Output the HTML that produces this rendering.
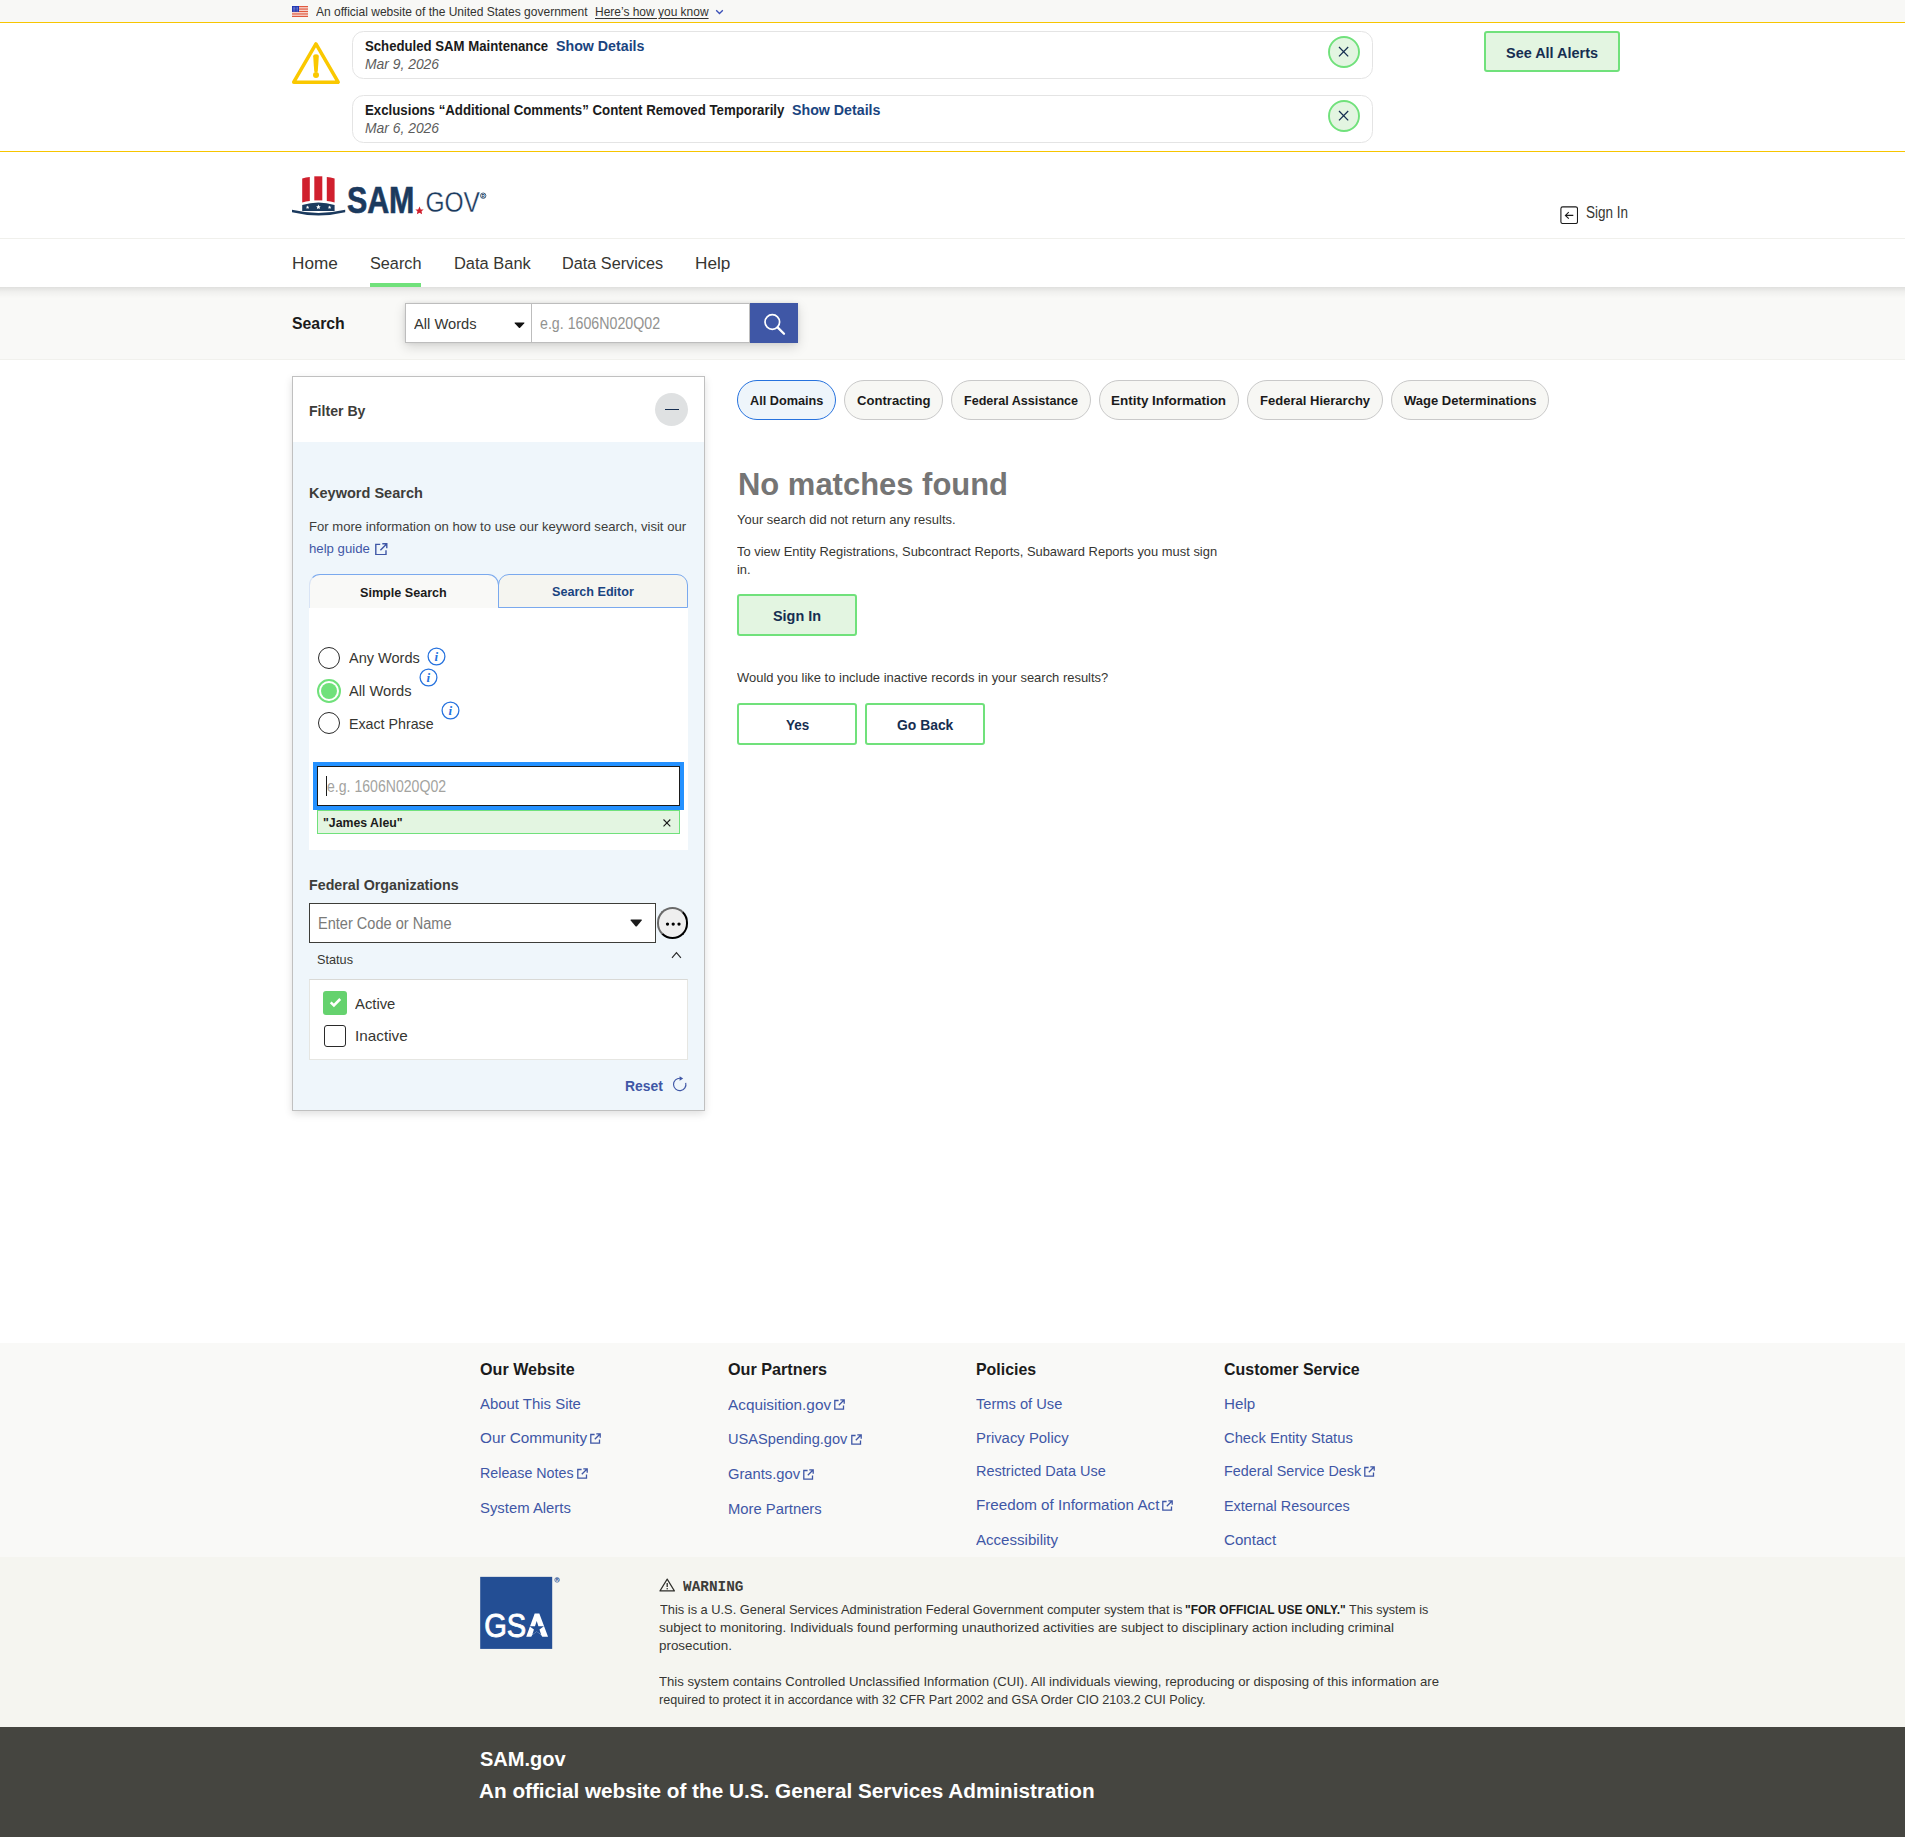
<!DOCTYPE html>
<html lang="en"><head><meta charset="utf-8"><title>SAM.gov | Search</title>
<style>
html,body{margin:0;padding:0}
body{width:1905px;height:1837px;position:relative;overflow:hidden;background:#fff;font-family:"Liberation Sans",sans-serif;}
#pg{position:absolute;left:0;top:0;width:1905px;height:1837px;overflow:hidden}
#pg div,#pg svg,#pg span{position:absolute;box-sizing:border-box}
#pg span{white-space:nowrap;line-height:1;transform-origin:0 0;display:block}
#pg span b{font-weight:700}
</style></head><body><div id="pg">
<div style="left:0px;top:0px;width:1905px;height:22px;background:#f8f8f6"></div>
<div style="left:0px;top:22px;width:1905px;height:1px;background:#f7c500"></div>
<div style="left:0px;top:151px;width:1905px;height:1px;background:#f7c500"></div>
<div style="left:0px;top:238px;width:1905px;height:1px;background:#f0f0ec"></div>
<div style="left:0px;top:287px;width:1905px;height:73px;background:#f9f9f7;border-bottom:1px solid #f1f1ed"></div>
<div style="left:0px;top:287px;width:1905px;height:11px;background:linear-gradient(to bottom,rgba(0,0,0,.10),rgba(0,0,0,.035) 45%,rgba(0,0,0,0))"></div>
<svg style="left:292px;top:6px" width="16" height="11" viewBox="0 0 16 11"><rect width="16" height="11" fill="#fff"/><rect y="0" width="16" height="0.85" fill="#db3e1f"/><rect y="1.69" width="16" height="0.85" fill="#db3e1f"/><rect y="3.38" width="16" height="0.85" fill="#db3e1f"/><rect y="5.07" width="16" height="0.85" fill="#db3e1f"/><rect y="6.76" width="16" height="0.85" fill="#db3e1f"/><rect y="8.45" width="16" height="0.85" fill="#db3e1f"/><rect y="10.15" width="16" height="0.85" fill="#db3e1f"/><rect width="7" height="5.9" fill="#1e33b1"/><g fill="#fff" opacity=".75"><rect x="0.9" y="0.9" width=".7" height=".6"/><rect x="2.3" y="0.9" width=".7" height=".6"/><rect x="3.7" y="0.9" width=".7" height=".6"/><rect x="5.1" y="0.9" width=".7" height=".6"/><rect x="0.9" y="2.2" width=".7" height=".6"/><rect x="2.3" y="2.2" width=".7" height=".6"/><rect x="3.7" y="2.2" width=".7" height=".6"/><rect x="5.1" y="2.2" width=".7" height=".6"/><rect x="0.9" y="3.5" width=".7" height=".6"/><rect x="2.3" y="3.5" width=".7" height=".6"/><rect x="3.7" y="3.5" width=".7" height=".6"/><rect x="5.1" y="3.5" width=".7" height=".6"/><rect x="0.9" y="4.7" width=".7" height=".6"/><rect x="2.3" y="4.7" width=".7" height=".6"/><rect x="3.7" y="4.7" width=".7" height=".6"/><rect x="5.1" y="4.7" width=".7" height=".6"/></g></svg>
<svg style="left:715px;top:8.5px" width="9" height="6" viewBox="0 0 9 6"><path d="M1.2 1.2 L4.5 4.5 L7.8 1.2" fill="none" stroke="#3a4fb8" stroke-width="1.3"/></svg>
<svg style="left:291px;top:40px" width="50" height="46" viewBox="0 0 50 46"><path d="M24.95 3.9 L47.2 42.2 L2.7 42.2 Z" fill="none" stroke="#fac800" stroke-width="3.5" stroke-linejoin="round"/><path d="M22.2 16.6 Q22.2 14.2 25 14.2 Q27.8 14.2 27.8 16.6 L26.8 31.2 Q26.7 32.3 25 32.3 Q23.3 32.3 23.2 31.2 Z" fill="#fac800"/><circle cx="25" cy="35" r="3" fill="#fac800"/></svg>
<div style="left:352px;top:31px;width:1021px;height:48px;border:1px solid #e4e4e4;border-radius:11.5px;background:#fff"></div>
<svg style="left:1326px;top:33.9px" width="36" height="36" viewBox="0 0 36 36"><circle cx="18" cy="18" r="15" fill="#e3f5e1" stroke="#70e17b" stroke-width="1.9"/><path d="M13 13 L22.2 22.4 M22.2 13 L13 22.4" stroke="#162e51" stroke-width="1.25" fill="none"/></svg>
<div style="left:352px;top:95px;width:1021px;height:48px;border:1px solid #e4e4e4;border-radius:11.5px;background:#fff"></div>
<svg style="left:1326px;top:97.9px" width="36" height="36" viewBox="0 0 36 36"><circle cx="18" cy="18" r="15" fill="#e3f5e1" stroke="#70e17b" stroke-width="1.9"/><path d="M13 13 L22.2 22.4 M22.2 13 L13 22.4" stroke="#162e51" stroke-width="1.25" fill="none"/></svg>
<div style="left:1484px;top:31.3px;width:135.7px;height:41px;border:2px solid #70e17b;background:#e3f5e1;border-radius:3px"></div>
<svg style="left:290px;top:174px" width="200" height="44" viewBox="290 174 200 44"><path d="M302.2 178.6 Q306 177.3 309.8 176.9 L309.8 201 Q306 201.4 302.2 202.4 Z" fill="#d0202e"/><path d="M314.3 176.3 L322.3 176.3 L322.3 200.4 L314.3 200.4 Z" fill="#d0202e"/><path d="M326.8 176.9 Q330.6 177.3 334.6 178.6 L334.6 202.4 Q330.6 201.4 326.8 201 Z" fill="#d0202e"/><path d="M302.2 205 Q318.4 199.8 334.6 205 L334.6 211 L302.2 211 Z" fill="#1b3a5e"/><path transform="translate(307.6 207.3) scale(1.9)" d="M0 -1 L.29 -.31 L.95 -.31 L.47 .12 L.59 .81 L0 .45 L-.59 .81 L-.47 .12 L-.95 -.31 L-.29 -.31 Z" fill="#fff"/><path transform="translate(318.4 207) scale(2.5)" d="M0 -1 L.29 -.31 L.95 -.31 L.47 .12 L.59 .81 L0 .45 L-.59 .81 L-.47 .12 L-.95 -.31 L-.29 -.31 Z" fill="#fff"/><path transform="translate(329.6 207.3) scale(1.9)" d="M0 -1 L.29 -.31 L.95 -.31 L.47 .12 L.59 .81 L0 .45 L-.59 .81 L-.47 .12 L-.95 -.31 L-.29 -.31 Z" fill="#fff"/><path d="M292 209.8 Q318.4 216 345.2 209.8 L345.2 212.2 Q318.4 218.6 292 212.2 Z" fill="#1b3a5e"/><path transform="translate(419.5 210.8) scale(4.4)" d="M0 -1 L.29 -.31 L.95 -.31 L.47 .12 L.59 .81 L0 .45 L-.59 .81 L-.47 .12 L-.95 -.31 L-.29 -.31 Z" fill="#d0202e"/><text x="346.9" y="212.7" font-family="Liberation Sans, sans-serif" font-weight="700" font-size="37.8" fill="#1b3a5e" stroke="#1b3a5e" stroke-width=".7" textLength="67.5" lengthAdjust="spacingAndGlyphs">SAM</text><text x="425.4" y="212.4" font-family="Liberation Sans, sans-serif" font-weight="400" font-size="28.8" fill="#1b3a5e" stroke="#fff" stroke-width=".3" paint-order="fill stroke" textLength="54.6" lengthAdjust="spacingAndGlyphs">GOV</text><circle cx="483.2" cy="195.7" r="2.7" fill="none" stroke="#1b3a5e" stroke-width=".8"/><text x="481.6" y="197.5" font-family="Liberation Sans, sans-serif" font-weight="700" font-size="4.6" fill="#1b3a5e">R</text></svg>
<svg style="left:1559.5px;top:205.5px" width="18.5" height="18.5" viewBox="0 0 18.5 18.5"><rect x=".9" y=".9" width="16.6" height="16.6" rx="1.8" fill="none" stroke="#1b1b1b" stroke-width="1.1"/><path d="M13.3 9.4 H5.6 M8.8 6.1 L5.4 9.4 L8.8 12.7" fill="none" stroke="#1b1b1b" stroke-width="1.1"/></svg>
<div style="left:370px;top:282.7px;width:51px;height:4.3px;background:#70e17b"></div>
<div style="left:405.3px;top:303px;width:392.4px;height:40px;box-shadow:0 4px 11px rgba(0,0,0,.15),0 0 4px rgba(0,0,0,.08);background:#fff"></div>
<div style="left:405.3px;top:303px;width:127px;height:40px;border:1px solid #bdbdbd;background:#fff"></div>
<div style="left:532.3px;top:303px;width:218px;height:40px;border:1px solid #bdbdbd;border-left:none;background:#fff"></div>
<svg style="left:513.5px;top:321.5px" width="11" height="6.4" viewBox="0 0 11 6.4"><path d="M1 .6 H10 Q10.8 .6 10.3 1.3 L6.1 5.7 Q5.5 6.3 4.9 5.7 L.7 1.3 Q.2 .6 1 .6 Z" fill="#111"/></svg>
<div style="left:749.7px;top:303px;width:48px;height:40px;background:#3f57a6"></div>
<svg style="left:762px;top:311.5px" width="24" height="24" viewBox="0 0 24 24"><circle cx="10.3" cy="10" r="7.3" fill="none" stroke="#fff" stroke-width="1.7"/><path d="M15.6 15.4 L22 21.8" stroke="#fff" stroke-width="2.3" stroke-linecap="round"/></svg>
<div style="left:292px;top:376px;width:413px;height:734.5px;border:1px solid #c0c0c0;background:#eff6fb;box-shadow:0 3px 8px rgba(0,0,0,.13)"></div>
<div style="left:293px;top:377px;width:411px;height:65px;background:#fff"></div>
<div style="left:655px;top:393px;width:33px;height:33px;border-radius:50%;background:#dfe1e2"></div>
<div style="left:664.6px;top:408.7px;width:14.6px;height:1.2px;background:#162e51"></div>
<svg style="left:375px;top:542.5px" width="12.6" height="12.4" viewBox="0 0 12.6 12.4"><path d="M5.2 1.4 H.8 V11.6 H11 V7.2" fill="none" stroke="#3f57a6" stroke-width="1.4"/><path d="M7.3 .8 H11.8 V5.3 M11.6 1 L5.4 7.2" fill="none" stroke="#3f57a6" stroke-width="1.4"/></svg>
<div style="left:309px;top:607px;width:379px;height:243px;background:#fff"></div>
<div style="left:309px;top:574px;width:189.8px;height:33.5px;border:1px solid #7aa9ee;border-left-color:rgba(122,169,238,.25);border-bottom:none;border-radius:11px 11px 0 0;background:#f9f9f7"></div>
<div style="left:498px;top:574px;width:190px;height:33.5px;border:1px solid #7aa9ee;border-radius:11px 11px 0 0;background:#f5f5f0"></div>
<div style="left:318px;top:646.9px;width:22px;height:22px;border-radius:50%;border:1.4px solid #2a2a2a;background:#fff"></div>
<div style="left:317.1px;top:679.2px;width:23.8px;height:23.8px;border-radius:50%;border:2.7px solid #70e17b;background:#fff"></div>
<div style="left:320.9px;top:683.0px;width:16.2px;height:16.2px;border-radius:50%;background:#70e17b"></div>
<div style="left:318px;top:711.8px;width:22px;height:22px;border-radius:50%;border:1.4px solid #2a2a2a;background:#fff"></div>
<svg style="left:426.6px;top:646.7px" width="19" height="19" viewBox="0 0 19 19"><circle cx="9.5" cy="9.5" r="8.4" fill="none" stroke="#2672de" stroke-width="1.25"/><text x="7.6" y="13.7" font-family="Liberation Serif, serif" font-style="italic" font-weight="700" font-size="13" fill="#2672de">i</text></svg>
<svg style="left:418.8px;top:667.7px" width="19" height="19" viewBox="0 0 19 19"><circle cx="9.5" cy="9.5" r="8.4" fill="none" stroke="#2672de" stroke-width="1.25"/><text x="7.6" y="13.7" font-family="Liberation Serif, serif" font-style="italic" font-weight="700" font-size="13" fill="#2672de">i</text></svg>
<svg style="left:440.6px;top:700.6px" width="19" height="19" viewBox="0 0 19 19"><circle cx="9.5" cy="9.5" r="8.4" fill="none" stroke="#2672de" stroke-width="1.25"/><text x="7.6" y="13.7" font-family="Liberation Serif, serif" font-style="italic" font-weight="700" font-size="13" fill="#2672de">i</text></svg>
<div style="left:313px;top:762px;width:371px;height:48px;background:#2491ff"></div>
<div style="left:317px;top:766px;width:363px;height:40px;border:1px solid #1b1b1b;background:#fff"></div>
<div style="left:326px;top:776px;width:1px;height:20px;background:#1b1b1b"></div>
<div style="left:317px;top:810.4px;width:363px;height:23.5px;border:1px solid #70e17b;background:#e3f5e1"></div>
<svg style="left:663.2px;top:819.3px" width="7.8" height="7.8" viewBox="0 0 7.8 7.8"><path d="M.5 .5 L7.3 7.3 M7.3 .5 L.5 7.3" stroke="#1b1b1b" stroke-width="1.1" fill="none"/></svg>
<div style="left:309px;top:903px;width:346.9px;height:40px;border:1.1px solid #3d3d38;background:#fff"></div>
<svg style="left:629.7px;top:919.2px" width="12.4" height="8" viewBox="0 0 12.4 8"><path d="M1 .6 H11.4 Q12.3 .6 11.7 1.4 L6.9 7.2 Q6.2 7.9 5.5 7.2 L.7 1.4 Q.1 .6 1 .6 Z" fill="#1b1b1b"/></svg>
<div style="left:656.7px;top:907.2px;width:31.4px;height:31.6px;border-radius:50%;border:2px solid;border-color:#6a6a6a #000 #000 #6a6a6a;background:#efefef"></div>
<svg style="left:664px;top:920px" width="18" height="8" viewBox="664 920 18 8"><circle cx="667.5" cy="924.1" r="1.65"/><circle cx="673.2" cy="924.1" r="1.65"/><circle cx="679" cy="924.1" r="1.65"/></svg>
<svg style="left:670px;top:950px" width="13" height="10" viewBox="670 950 13 10"><path d="M672 957.9 L676.45 952.6 L680.9 957.9" fill="none" stroke="#2a2a2a" stroke-width="1.15"/></svg>
<div style="left:309px;top:979.2px;width:379px;height:80.6px;border:1px solid #e6e6e2;border-top:1.5px solid #d9d9d6;background:#fff"></div>
<div style="left:323.2px;top:991px;width:23.8px;height:23.8px;border-radius:3px;background:#65d26e"></div>
<svg style="left:328.5px;top:996.7px" width="13" height="11" viewBox="0 0 13 11"><path d="M1.7 5.4 L4.9 8.5 L11.2 2" fill="none" stroke="#fff" stroke-width="2.6"/></svg>
<div style="left:324px;top:1025px;width:22px;height:22px;border-radius:3px;border:1.4px solid #2a2a2a;background:#fff"></div>
<svg style="left:672px;top:1076px" width="16" height="16" viewBox="0 0 16 16"><path d="M13.7 6.8 A6.2 6.2 0 1 1 8.3 2.25" fill="none" stroke="#3f57a6" stroke-width="1.15"/><path d="M7.6 .2 L11.2 2.4 L7.6 4.8 Z" fill="#3f57a6"/></svg>
<div style="left:737.2px;top:380.3px;width:98.79999999999998px;height:39.3px;border:1px solid #2672de;background:#eef5fb;border-radius:20px"></div>
<div style="left:844.1px;top:380.3px;width:98.9px;height:39.3px;border:1px solid #c9c9c9;background:#f7f7f4;border-radius:20px"></div>
<div style="left:951.1px;top:380.3px;width:139.8999999999999px;height:39.3px;border:1px solid #c9c9c9;background:#f7f7f4;border-radius:20px"></div>
<div style="left:1099.2px;top:380.3px;width:139.99999999999991px;height:39.3px;border:1px solid #c9c9c9;background:#f7f7f4;border-radius:20px"></div>
<div style="left:1247.3px;top:380.3px;width:135.9px;height:39.3px;border:1px solid #c9c9c9;background:#f7f7f4;border-radius:20px"></div>
<div style="left:1391.3px;top:380.3px;width:158.00000000000014px;height:39.3px;border:1px solid #c9c9c9;background:#f7f7f4;border-radius:20px"></div>
<div style="left:737.2px;top:594.3px;width:119.6px;height:41.6px;border:2px solid #70e17b;background:#e3f5e1;border-radius:3px"></div>
<div style="left:737.2px;top:703.1px;width:119.6px;height:41.6px;border:2px solid #70e17b;background:#fff;border-radius:3px"></div>
<div style="left:864.9px;top:703.1px;width:120.1px;height:41.6px;border:2px solid #70e17b;background:#fff;border-radius:3px"></div>
<div style="left:0px;top:1342.6px;width:1905px;height:214.4px;background:#f9f9f7"></div>
<div style="left:0px;top:1557px;width:1905px;height:170.5px;background:#f5f5f0"></div>
<div style="left:0px;top:1727.4px;width:1905px;height:110px;background:#454540"></div>
<svg style="left:590.1px;top:1432.8000000000002px" width="11" height="11" viewBox="0 0 11 11"><path d="M4.6 1.5 H.8 V10.2 H9.5 V6.4" fill="none" stroke="#3f57a6" stroke-width="1.3"/><path d="M6.3 .8 H10.2 V4.7 M10 1 L4.8 6.2" fill="none" stroke="#3f57a6" stroke-width="1.3"/></svg>
<svg style="left:576.5px;top:1467.9px" width="11" height="11" viewBox="0 0 11 11"><path d="M4.6 1.5 H.8 V10.2 H9.5 V6.4" fill="none" stroke="#3f57a6" stroke-width="1.3"/><path d="M6.3 .8 H10.2 V4.7 M10 1 L4.8 6.2" fill="none" stroke="#3f57a6" stroke-width="1.3"/></svg>
<svg style="left:834.2px;top:1399.4px" width="11" height="11" viewBox="0 0 11 11"><path d="M4.6 1.5 H.8 V10.2 H9.5 V6.4" fill="none" stroke="#3f57a6" stroke-width="1.3"/><path d="M6.3 .8 H10.2 V4.7 M10 1 L4.8 6.2" fill="none" stroke="#3f57a6" stroke-width="1.3"/></svg>
<svg style="left:850.5px;top:1433.8000000000002px" width="11" height="11" viewBox="0 0 11 11"><path d="M4.6 1.5 H.8 V10.2 H9.5 V6.4" fill="none" stroke="#3f57a6" stroke-width="1.3"/><path d="M6.3 .8 H10.2 V4.7 M10 1 L4.8 6.2" fill="none" stroke="#3f57a6" stroke-width="1.3"/></svg>
<svg style="left:803.2px;top:1468.7px" width="11" height="11" viewBox="0 0 11 11"><path d="M4.6 1.5 H.8 V10.2 H9.5 V6.4" fill="none" stroke="#3f57a6" stroke-width="1.3"/><path d="M6.3 .8 H10.2 V4.7 M10 1 L4.8 6.2" fill="none" stroke="#3f57a6" stroke-width="1.3"/></svg>
<svg style="left:1162.3px;top:1499.9px" width="11" height="11" viewBox="0 0 11 11"><path d="M4.6 1.5 H.8 V10.2 H9.5 V6.4" fill="none" stroke="#3f57a6" stroke-width="1.3"/><path d="M6.3 .8 H10.2 V4.7 M10 1 L4.8 6.2" fill="none" stroke="#3f57a6" stroke-width="1.3"/></svg>
<svg style="left:1364.3999999999999px;top:1465.8000000000002px" width="11" height="11" viewBox="0 0 11 11"><path d="M4.6 1.5 H.8 V10.2 H9.5 V6.4" fill="none" stroke="#3f57a6" stroke-width="1.3"/><path d="M6.3 .8 H10.2 V4.7 M10 1 L4.8 6.2" fill="none" stroke="#3f57a6" stroke-width="1.3"/></svg>
<svg style="left:480px;top:1576px" width="82" height="74" viewBox="480 1576 82 74"><rect x="480.2" y="1576.85" width="72" height="72.05" fill="#234e94"/><text x="484.2" y="1636.8" font-family="Liberation Sans, sans-serif" font-size="33.6" fill="#fff" stroke="#fff" stroke-width=".9" textLength="42" lengthAdjust="spacingAndGlyphs">GS</text><path d="M526.2 1636.8 L534.7 1613.4 L539.3 1613.4 L548 1636.8 Z" fill="#fff"/><polygon points="536.70,1621.10 538.41,1626.35 543.93,1626.35 539.46,1629.60 541.17,1634.85 536.70,1631.60 532.23,1634.85 533.94,1629.60 529.47,1626.35 534.99,1626.35" fill="#234e94"/><path d="M532.2 1634.9 L536.7 1631.6 L541.2 1634.9 L542.3 1637 L531.2 1637 Z" fill="#234e94"/><circle cx="557.1" cy="1579.9" r="2.3" fill="none" stroke="#234e94" stroke-width=".7"/><text x="555.7" y="1581.4" font-family="Liberation Sans, sans-serif" font-weight="700" font-size="4" fill="#234e94">R</text></svg>
<svg style="left:659px;top:1578.2px" width="16.4" height="13.6" viewBox="0 0 16.4 13.6"><path d="M8.2 1.1 L15.4 12.9 H1 Z" fill="none" stroke="#2e2e2a" stroke-width="1.15" stroke-linejoin="round"/><path d="M8.2 5 V9" stroke="#2e2e2a" stroke-width="1.3"/><circle cx="8.2" cy="10.8" r=".8" fill="#2e2e2a"/></svg>
<span style="left:315.99px;top:6.01px;font-size:12.6px;color:#333330;transform:scaleX(0.9539);">An official website of the United States government</span>
<span style="left:595.38px;top:6.01px;font-size:12.6px;color:#333330;transform:scaleX(0.9506);text-decoration:underline;text-underline-offset:1.5px;text-decoration-thickness:1px;">Here’s how you know</span>
<span style="left:364.94px;top:39.01px;font-size:14.5px;color:#1b1b1b;font-weight:700;transform:scaleX(0.9087);">Scheduled SAM Maintenance</span>
<span style="left:556.34px;top:39.01px;font-size:14.5px;color:#1a4480;font-weight:700;transform:scaleX(0.9801);">Show Details</span>
<span style="left:364.94px;top:57.01px;font-size:14.6px;color:#5c5c5c;font-style:italic;transform:scaleX(0.9508);">Mar 9, 2026</span>
<span style="left:364.94px;top:103.01px;font-size:14.5px;color:#1b1b1b;font-weight:700;transform:scaleX(0.9137);">Exclusions “Additional Comments” Content Removed Temporarily</span>
<span style="left:792.34px;top:103.01px;font-size:14.5px;color:#1a4480;font-weight:700;transform:scaleX(0.9801);">Show Details</span>
<span style="left:364.94px;top:121.01px;font-size:14.6px;color:#5c5c5c;font-style:italic;transform:scaleX(0.9508);">Mar 6, 2026</span>
<span style="left:1506.32px;top:45.01px;font-size:15.2px;color:#162e51;font-weight:700;transform:scaleX(0.9503);">See All Alerts</span>
<span style="left:1585.61px;top:205.01px;font-size:15.6px;color:#363632;transform:scaleX(0.8649);">Sign In</span>
<span style="left:291.87px;top:255.00px;font-size:17.4px;color:#363632;transform:scaleX(0.9869);">Home</span>
<span style="left:369.56px;top:255.00px;font-size:17.4px;color:#363632;transform:scaleX(0.9342);">Search</span>
<span style="left:453.56px;top:255.00px;font-size:17.4px;color:#363632;transform:scaleX(0.9454);">Data Bank</span>
<span style="left:562.27px;top:255.00px;font-size:17.4px;color:#363632;transform:scaleX(0.9338);">Data Services</span>
<span style="left:695.27px;top:255.00px;font-size:17.4px;color:#363632;transform:scaleX(0.9889);">Help</span>
<span style="left:291.88px;top:316.00px;font-size:16.6px;color:#1b1b1b;font-weight:700;transform:scaleX(0.9528);">Search</span>
<span style="left:413.72px;top:316.01px;font-size:15.4px;color:#363632;transform:scaleX(0.9545);">All Words</span>
<span style="left:539.91px;top:316.01px;font-size:15.6px;color:#929290;transform:scaleX(0.9113);">e.g. 1606N020Q02</span>
<span style="left:309.24px;top:404.00px;font-size:14.4px;color:#3d3d3a;font-weight:700;transform:scaleX(0.9804);">Filter By</span>
<span style="left:309.24px;top:486.01px;font-size:14.6px;color:#3d3d3a;font-weight:700;transform:scaleX(0.9955);">Keyword Search</span>
<span style="left:308.98px;top:521.00px;font-size:12.7px;color:#3d3d3a;transform:scaleX(1.0323);">For more information on how to use our keyword search, visit our</span>
<span style="left:308.98px;top:543.01px;font-size:12.7px;color:#3f57a6;transform:scaleX(1.0394);">help guide</span>
<span style="left:359.77px;top:586.02px;font-size:13.2px;color:#1b1b1b;font-weight:700;transform:scaleX(0.9549);">Simple Search</span>
<span style="left:552.17px;top:585.01px;font-size:13.2px;color:#1a4480;font-weight:700;transform:scaleX(0.9550);">Search Editor</span>
<span style="left:348.73px;top:650.01px;font-size:15px;color:#363632;transform:scaleX(0.9683);">Any Words</span>
<span style="left:348.73px;top:683.01px;font-size:15px;color:#363632;transform:scaleX(0.9792);">All Words</span>
<span style="left:348.73px;top:716.00px;font-size:15px;color:#363632;transform:scaleX(0.9480);">Exact Phrase</span>
<span style="left:326.61px;top:779.01px;font-size:15.6px;color:#a3a3a0;transform:scaleX(0.9037);">e.g. 1606N020Q02</span>
<span style="left:323.07px;top:816.01px;font-size:13px;color:#1b1b1b;font-weight:700;transform:scaleX(0.9462);">"James Aleu"</span>
<span style="left:309.24px;top:878.01px;font-size:14.6px;color:#3d3d3a;font-weight:700;transform:scaleX(0.9764);">Federal Organizations</span>
<span style="left:318.31px;top:916.01px;font-size:15.6px;color:#7a7a78;transform:scaleX(0.9335);">Enter Code or Name</span>
<span style="left:317.28px;top:954.01px;font-size:12.8px;color:#363632;transform:scaleX(0.9916);">Status</span>
<span style="left:354.52px;top:996.00px;font-size:15px;color:#363632;transform:scaleX(0.9881);">Active</span>
<span style="left:355.12px;top:1028.00px;font-size:15px;color:#363632;transform:scaleX(1.0188);">Inactive</span>
<span style="left:625.24px;top:1079.01px;font-size:14.4px;color:#3f57a6;font-weight:700;transform:scaleX(0.9654);">Reset</span>
<span style="left:749.72px;top:394.01px;font-size:13.2px;color:#1b1b1b;font-weight:700;transform:scaleX(0.9616);">All Domains</span>
<span style="left:856.52px;top:394.01px;font-size:13.2px;color:#1b1b1b;font-weight:700;transform:scaleX(0.9945);">Contracting</span>
<span style="left:963.77px;top:394.01px;font-size:13.2px;color:#1b1b1b;font-weight:700;transform:scaleX(0.9529);">Federal Assistance</span>
<span style="left:1111.17px;top:394.01px;font-size:13.2px;color:#1b1b1b;font-weight:700;transform:scaleX(1.0201);">Entity Information</span>
<span style="left:1259.72px;top:394.01px;font-size:13.2px;color:#1b1b1b;font-weight:700;transform:scaleX(0.9881);">Federal Hierarchy</span>
<span style="left:1403.52px;top:394.01px;font-size:13.2px;color:#1b1b1b;font-weight:700;transform:scaleX(0.9870);">Wage Determinations</span>
<span style="left:737.81px;top:469.00px;font-size:31.7px;color:#757575;font-weight:700;transform:scaleX(0.9769);">No matches found</span>
<span style="left:737.08px;top:514.02px;font-size:12.8px;color:#363632;transform:scaleX(1.0130);">Your search did not return any results.</span>
<span style="left:737.08px;top:546.01px;font-size:12.8px;color:#363632;transform:scaleX(1.0089);">To view Entity Registrations, Subcontract Reports, Subaward Reports you must sign</span>
<span style="left:737.08px;top:564.01px;font-size:12.8px;color:#363632;transform:scaleX(1.0045);">in.</span>
<span style="left:773.34px;top:609.00px;font-size:14.4px;color:#162e51;font-weight:700;transform:scaleX(1.0017);">Sign In</span>
<span style="left:737.08px;top:672.01px;font-size:12.8px;color:#363632;transform:scaleX(1.0122);">Would you like to include inactive records in your search results?</span>
<span style="left:785.74px;top:718.00px;font-size:14.4px;color:#162e51;font-weight:700;transform:scaleX(0.9369);">Yes</span>
<span style="left:897.14px;top:718.00px;font-size:14.4px;color:#162e51;font-weight:700;transform:scaleX(0.9650);">Go Back</span>
<span style="left:479.58px;top:1362.01px;font-size:16.7px;color:#1b1b1b;font-weight:700;transform:scaleX(0.9660);">Our Website</span>
<span style="left:727.78px;top:1362.01px;font-size:16.7px;color:#1b1b1b;font-weight:700;transform:scaleX(0.9700);">Our Partners</span>
<span style="left:975.58px;top:1362.01px;font-size:16.7px;color:#1b1b1b;font-weight:700;transform:scaleX(0.9520);">Policies</span>
<span style="left:1223.88px;top:1362.01px;font-size:16.7px;color:#1b1b1b;font-weight:700;transform:scaleX(0.9558);">Customer Service</span>
<span style="left:479.62px;top:1396.00px;font-size:15.4px;color:#3f57a6;transform:scaleX(0.9693);">About This Site</span>
<span style="left:479.62px;top:1430.00px;font-size:15.4px;color:#3f57a6;transform:scaleX(0.9947);">Our Community</span>
<span style="left:479.62px;top:1465.01px;font-size:15.4px;color:#3f57a6;transform:scaleX(0.9271);">Release Notes</span>
<span style="left:479.62px;top:1500.00px;font-size:15.4px;color:#3f57a6;transform:scaleX(0.9660);">System Alerts</span>
<span style="left:727.82px;top:1397.01px;font-size:15.4px;color:#3f57a6;transform:scaleX(0.9958);">Acquisition.gov</span>
<span style="left:727.82px;top:1431.00px;font-size:15.4px;color:#3f57a6;transform:scaleX(0.9492);">USASpending.gov</span>
<span style="left:727.82px;top:1466.01px;font-size:15.4px;color:#3f57a6;transform:scaleX(0.9576);">Grants.gov</span>
<span style="left:727.82px;top:1501.00px;font-size:15.4px;color:#3f57a6;transform:scaleX(0.9608);">More Partners</span>
<span style="left:975.62px;top:1396.00px;font-size:15.4px;color:#3f57a6;transform:scaleX(0.9519);">Terms of Use</span>
<span style="left:975.62px;top:1430.00px;font-size:15.4px;color:#3f57a6;transform:scaleX(0.9666);">Privacy Policy</span>
<span style="left:975.62px;top:1463.00px;font-size:15.4px;color:#3f57a6;transform:scaleX(0.9424);">Restricted Data Use</span>
<span style="left:975.62px;top:1497.01px;font-size:15.4px;color:#3f57a6;transform:scaleX(0.9879);">Freedom of Information Act</span>
<span style="left:975.62px;top:1532.00px;font-size:15.4px;color:#3f57a6;transform:scaleX(0.9793);">Accessibility</span>
<span style="left:1223.91px;top:1396.00px;font-size:15.4px;color:#3f57a6;transform:scaleX(0.9854);">Help</span>
<span style="left:1223.91px;top:1430.00px;font-size:15.4px;color:#3f57a6;transform:scaleX(0.9589);">Check Entity Status</span>
<span style="left:1223.91px;top:1463.00px;font-size:15.4px;color:#3f57a6;transform:scaleX(0.9325);">Federal Service Desk</span>
<span style="left:1223.91px;top:1498.01px;font-size:15.4px;color:#3f57a6;transform:scaleX(0.9351);">External Resources</span>
<span style="left:1223.91px;top:1532.00px;font-size:15.4px;color:#3f57a6;transform:scaleX(0.9820);">Contact</span>
<span style="left:683.03px;top:1580.01px;font-size:14.6px;color:#3d3d3a;font-weight:700;font-family:'Liberation Mono',monospace;transform:scaleX(0.9860);">WARNING</span>
<span style="left:659.50px;top:1604.02px;font-size:12.8px;color:#363632;transform:scaleX(1.0019);">This is a U.S. General Services Administration Federal Government computer system that is</span>
<span style="left:1184.90px;top:1604.02px;font-size:12.8px;color:#1b1b1b;font-weight:700;transform:scaleX(0.9375);">"FOR OFFICIAL USE ONLY."</span>
<span style="left:1349.20px;top:1604.02px;font-size:12.8px;color:#363632;transform:scaleX(0.9783);">This system is</span>
<span style="left:659.18px;top:1622.01px;font-size:12.8px;color:#363632;transform:scaleX(1.0458);">subject to monitoring. Individuals found performing unauthorized activities are subject to disciplinary action including criminal</span>
<span style="left:659.18px;top:1640.01px;font-size:12.8px;color:#363632;transform:scaleX(1.0467);">prosecution.</span>
<span style="left:659.18px;top:1676.00px;font-size:12.8px;color:#363632;transform:scaleX(1.0269);">This system contains Controlled Unclassified Information (CUI). All individuals viewing, reproducing or disposing of this information are</span>
<span style="left:659.18px;top:1694.02px;font-size:12.8px;color:#363632;transform:scaleX(0.9829);">required to protect it in accordance with 32 CFR Part 2002 and GSA Order CIO 2103.2 CUI Policy.</span>
<span style="left:479.97px;top:1748.00px;font-size:21.1px;color:#fff;font-weight:700;transform:scaleX(0.9501);">SAM.gov</span>
<span style="left:479.47px;top:1780.01px;font-size:21.1px;color:#fff;font-weight:700;transform:scaleX(0.9828);">An official website of the U.S. General Services Administration</span>
</div></body></html>
